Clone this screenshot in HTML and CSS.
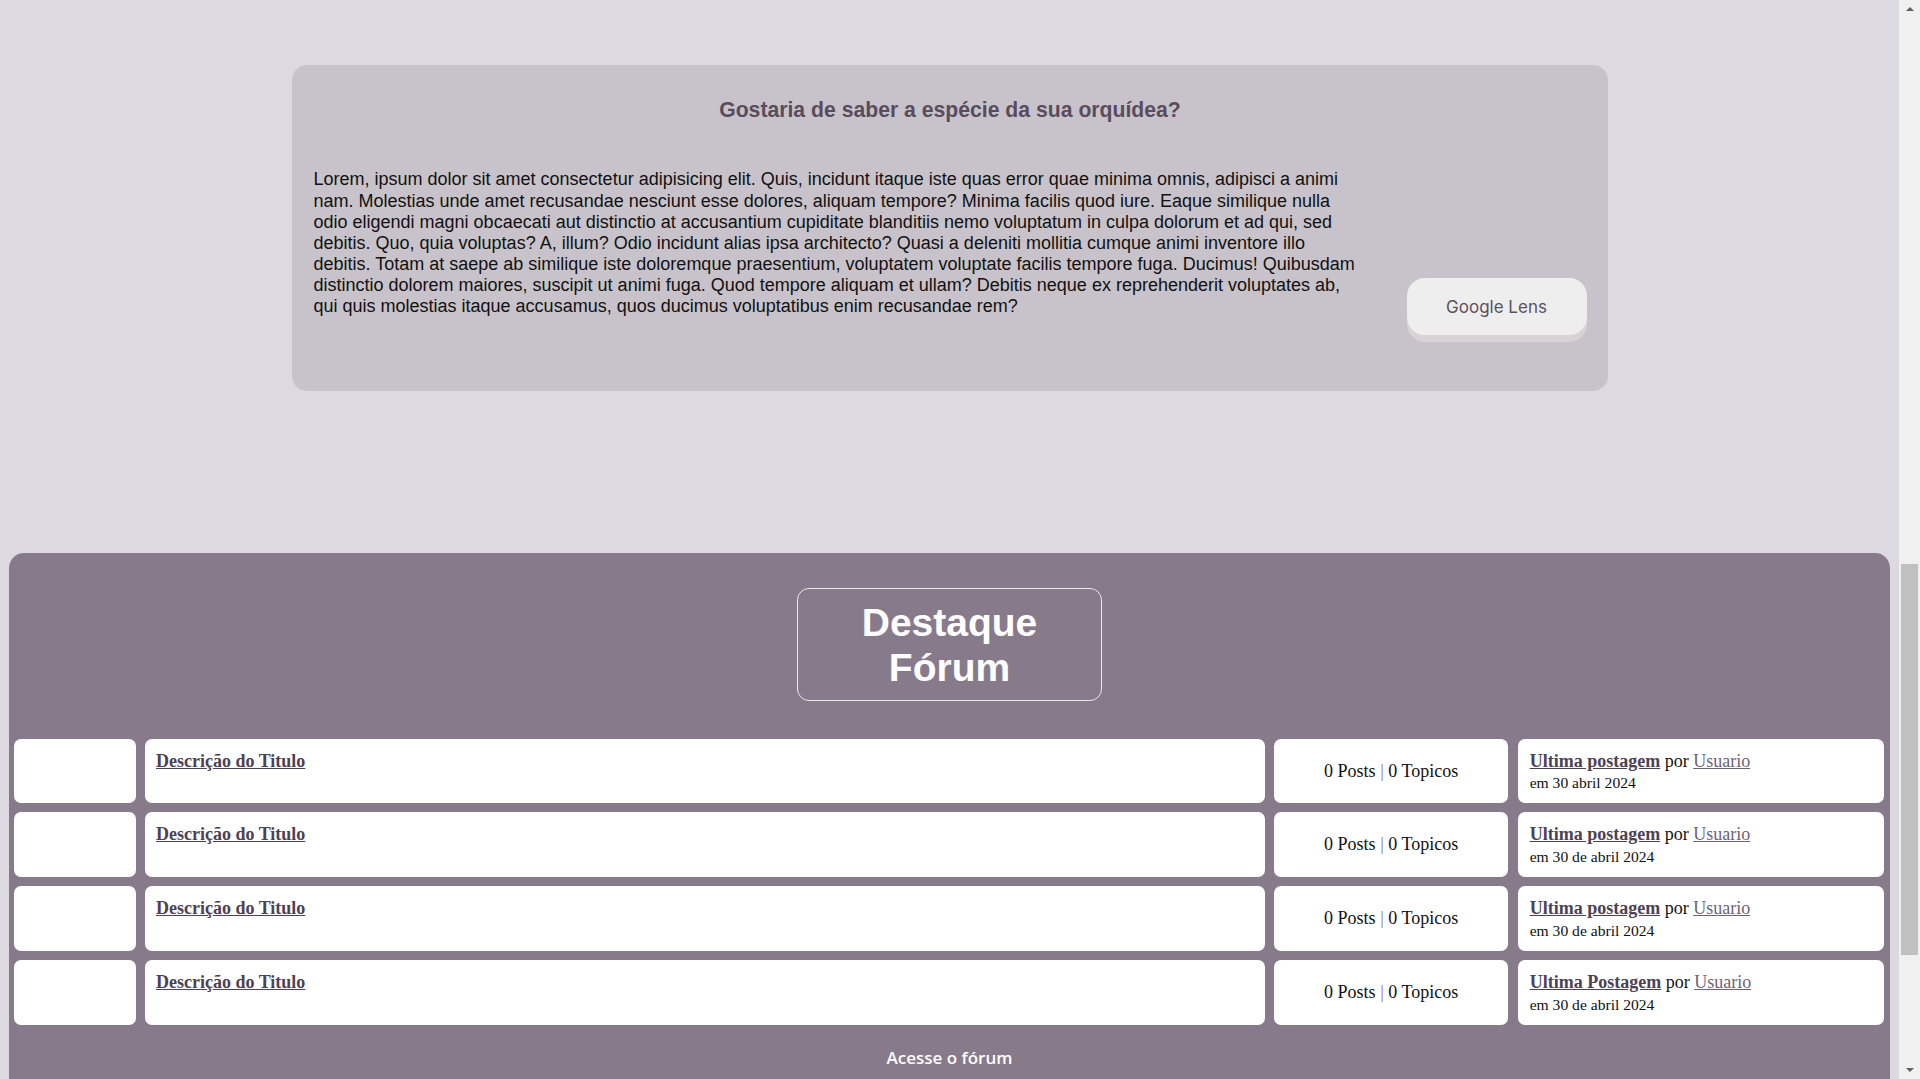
FILE: index.html
```html
<!DOCTYPE html>
<html lang="pt-BR">
<head>
<meta charset="utf-8">
<title>Orquídeas</title>
<link rel="stylesheet" href="styles.css">
</head>
<body>
<div class="page">
  <section class="lens-card">
    <h3 class="lens-title">Gostaria de saber a espécie da sua orquídea?</h3>
    <div class="lens-row">
      <p class="lens-text">Lorem, ipsum dolor sit amet consectetur adipisicing elit. Quis, incidunt itaque iste quas error quae minima omnis, adipisci a animi nam. Molestias unde amet recusandae nesciunt esse dolores, aliquam tempore? Minima facilis quod iure. Eaque similique nulla odio eligendi magni obcaecati aut distinctio at accusantium cupiditate blanditiis nemo voluptatum in culpa dolorum et ad qui, sed debitis. Quo, quia voluptas? A, illum? Odio incidunt alias ipsa architecto? Quasi a deleniti mollitia cumque animi inventore illo debitis. Totam at saepe ab similique iste doloremque praesentium, voluptatem voluptate facilis tempore fuga. Ducimus! Quibusdam distinctio dolorem maiores, suscipit ut animi fuga. Quod tempore aliquam et ullam? Debitis neque ex reprehenderit voluptates ab, qui quis molestias itaque accusamus, quos ducimus voluptatibus enim recusandae rem?</p>
      <button class="lens-btn" type="button">Google Lens</button>
    </div>
  </section>

  <section class="forum">
    <h2 class="forum-title">Destaque<br>Fórum</h2>

    <div class="forum-grid">
      <div class="cell cell-icon"></div>
      <div class="cell cell-desc"><a href="#" class="strong-link">Descrição do Titulo</a></div>
      <div class="cell cell-stats">0 Posts <span class="sep">|</span> 0 Topicos</div>
      <div class="cell cell-last"><a href="#" class="strong-link">Ultima postagem</a> por <a href="#" class="user-link">Usuario</a><br><span class="date">em 30 abril 2024</span></div>

      <div class="cell cell-icon"></div>
      <div class="cell cell-desc"><a href="#" class="strong-link">Descrição do Titulo</a></div>
      <div class="cell cell-stats">0 Posts <span class="sep">|</span> 0 Topicos</div>
      <div class="cell cell-last"><a href="#" class="strong-link">Ultima postagem</a> por <a href="#" class="user-link">Usuario</a><br><span class="date">em 30 de abril 2024</span></div>

      <div class="cell cell-icon"></div>
      <div class="cell cell-desc"><a href="#" class="strong-link">Descrição do Titulo</a></div>
      <div class="cell cell-stats">0 Posts <span class="sep">|</span> 0 Topicos</div>
      <div class="cell cell-last"><a href="#" class="strong-link">Ultima postagem</a> por <a href="#" class="user-link">Usuario</a><br><span class="date">em 30 de abril 2024</span></div>

      <div class="cell cell-icon"></div>
      <div class="cell cell-desc"><a href="#" class="strong-link">Descrição do Titulo</a></div>
      <div class="cell cell-stats">0 Posts <span class="sep">|</span> 0 Topicos</div>
      <div class="cell cell-last"><a href="#" class="strong-link">Ultima Postagem</a> por <a href="#" class="user-link">Usuario</a><br><span class="date">em 30 de abril 2024</span></div>
    </div>

    <a href="#" class="forum-access">Acesse o fórum</a>
  </section>
</div>

<div class="scrollbar" aria-hidden="true">
  <span class="scroll-arrow scroll-arrow-up"></span>
  <div class="scroll-track"><div class="scroll-thumb"></div></div>
  <span class="scroll-arrow scroll-arrow-down"></span>
</div>
</body>
</html>
```

FILE: styles.css
```css
html {
  background: #dcdae0;
  overflow: hidden;
}

body {
  margin: 0;
  background: #dcdae0;
  font-family: "Liberation Serif", "Times New Roman", serif;
}

.page {
  padding: 0 30px 0 9px;
}

/* ---------- Google Lens card ---------- */
.lens-card {
  box-sizing: border-box;
  width: 1316px;
  height: 326px;
  margin: 65px auto 0;
  padding: 33px 21px 0 22px;
  background: #c8c3ca;
  border-radius: 15px;
}

.lens-title {
  margin: 0;
  text-align: center;
  font-family: "Liberation Sans", Arial, sans-serif;
  font-weight: bold;
  font-size: 21.2px;
  line-height: 24.4px;
  color: #584c5d;
}

.lens-row {
  display: flex;
  justify-content: space-between;
  align-items: flex-start;
  margin-top: 47px;
}

.lens-text {
  width: 1047px;
  margin: 0;
  font-family: "Liberation Sans", Arial, sans-serif;
  font-size: 18px;
  line-height: 21.1px;
  color: #111;
}

.lens-btn {
  width: 180px;
  height: 57px;
  margin-top: 109px;
  padding: 0;
  border: 0;
  border-radius: 18px;
  background: #efeeef;
  box-shadow: 0 7px 0 #d9d3d6;
  font-family: Inter, "Noto Sans", sans-serif;
  font-size: 17px;
  color: #5b5160;
}

/* ---------- Forum ---------- */
.forum {
  box-sizing: border-box;
  min-height: 821px;
  margin-top: 162px;
  padding: 35px 5.3px 40px;
  background: #877a8b;
  border-radius: 15px;
  display: flex;
  flex-direction: column;
  align-items: center;
}

.forum-title {
  box-sizing: border-box;
  width: 305px;
  margin: 0;
  padding: 11px 0 10.4px;
  border: 1px solid #ece8ec;
  border-radius: 12px;
  text-align: center;
  font-family: "Liberation Sans", Arial, sans-serif;
  font-weight: bold;
  font-size: 39px;
  line-height: 45px;
  color: #ffffff;
}

.forum-grid {
  align-self: stretch;
  display: grid;
  grid-template-columns: 121.4px 1119.6px 234.5px 366.6px;
  grid-auto-rows: 64.7px;
  column-gap: 9.3px;
  row-gap: 9px;
  margin-top: 37.4px;
}

.cell {
  box-sizing: border-box;
  background: #ffffff;
  border-radius: 7px;
  font-size: 18px;
  line-height: 20.7px;
  color: #111;
}

.cell-desc {
  padding: 12px 11px 0;
}

.cell-last {
  padding: 12px 12px 0;
}

.cell-stats {
  display: flex;
  align-items: center;
  justify-content: center;
  white-space: pre;
}

.sep {
  color: #877a8b;
}

.strong-link {
  font-weight: bold;
  color: #4d4253;
  text-decoration: underline;
}

.user-link {
  color: #6e6274;
  text-decoration: underline;
}

.date {
  display: inline-block;
  margin-top: 2px;
  font-size: 15.6px;
  line-height: 20px;
}

.forum-access {
  margin-top: 21px;
  font-family: "Open Sans", "Noto Sans", sans-serif;
  font-size: 17px;
  font-weight: 600;
  line-height: 23px;
  color: #ffffff;
  text-decoration: none;
}

/* ---------- window scrollbar (as in the capture) ---------- */
.scrollbar {
  position: fixed;
  top: 0;
  right: 0;
  width: 21px;
  height: 100vh;
  background: #f0f0f0;
  display: flex;
  flex-direction: column;
  align-items: center;
}

.scroll-arrow {
  flex: none;
  width: 0;
  height: 0;
  border-left: 4px solid transparent;
  border-right: 4px solid transparent;
}

.scroll-arrow-up {
  margin: 7px 0 6px;
  border-bottom: 4px solid #606060;
}

.scroll-arrow-down {
  margin: 6px 0 7px;
  border-top: 4px solid #606060;
}

.scroll-track {
  flex: 1;
  align-self: stretch;
  display: flex;
  flex-direction: column;
  align-items: center;
}

.scroll-thumb {
  width: 17px;
  height: 391px;
  margin-top: 547px;
  background: #c0c0c0;
}
```
